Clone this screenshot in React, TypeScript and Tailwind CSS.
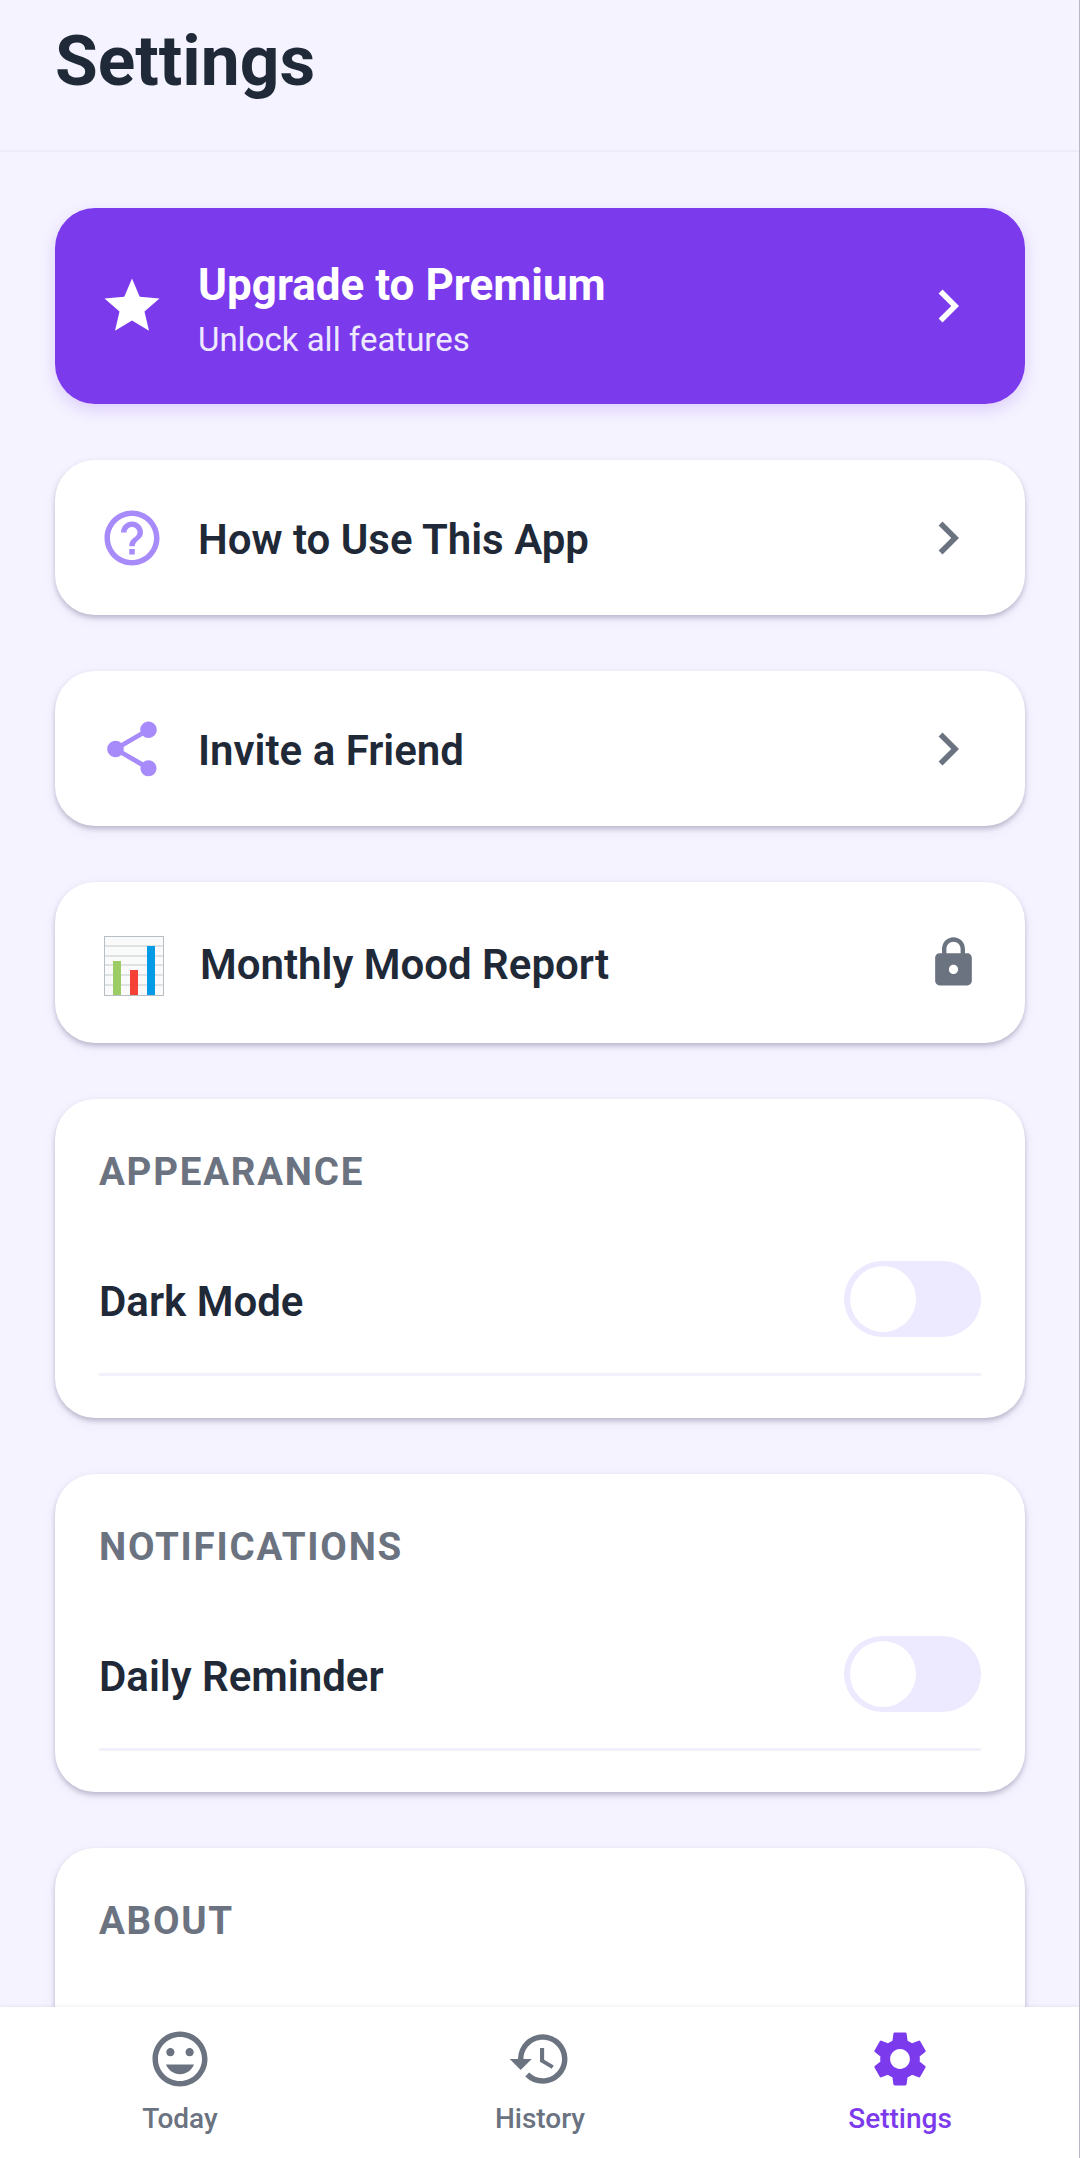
import {
  MdChevronRight,
  MdHelpOutline,
  MdHistory,
  MdLock,
  MdMood,
  MdSettings,
  MdShare,
  MdStar,
} from "react-icons/md";

function ChartEmoji() {
  return (
    <svg width="60" height="60" viewBox="0 0 60 60">
      <rect x="0.5" y="0.5" width="59" height="59" fill="#fafafa" stroke="#b8bfc4" />
      {[10, 20, 29, 39, 49].map((y) => (
        <line key={y} x1="1" x2="59" y1={y} y2={y} stroke="#c4cacd" strokeWidth="1" />
      ))}
      <rect x="9" y="25" width="8" height="34" fill="#9ccc65" />
      <rect x="26" y="34" width="8" height="25" fill="#f44336" />
      <rect x="43" y="10" width="8" height="49" fill="#039be5" />
    </svg>
  );
}

function Toggle() {
  return (
    <div className="flex h-[76px] w-[137px] items-center rounded-full bg-[#ede9fe] pl-[6px]">
      <div className="h-[66px] w-[66px] rounded-full bg-white" />
    </div>
  );
}

function LinkCard({ icon, label }: { icon: React.ReactNode; label: string }) {
  return (
    <div className="flex h-[155px] items-center rounded-[40px] bg-white px-[44px] shadow-[0_3px_5px_rgba(60,50,90,0.28),0_4px_14px_rgba(90,70,160,0.06)]">
      {icon}
      <span className="ml-[33px] flex-1 pt-[3px] text-[42px] font-semibold text-[#1f2937]">{label}</span>
      <MdChevronRight className="text-[#6b7280]" size={66} />
    </div>
  );
}

function ToggleSection({ title, label, height }: { title: string; label: string; height: string }) {
  return (
    <div className={`${height} rounded-[40px] bg-white px-[44px] pt-[52px] shadow-[0_3px_5px_rgba(60,50,90,0.28),0_4px_14px_rgba(90,70,160,0.06)]`}>
      <div className="text-[38.5px] leading-[42px] font-bold tracking-[1.75px] text-[#6b7280]">{title}</div>
      <div className="mt-[32px] flex h-[151px] items-center justify-between border-b-[3px] border-[#f3f0fc]">
        <span className="pt-[4px] text-[42px] font-semibold text-[#1f2937]">{label}</span>
        <Toggle />
      </div>
    </div>
  );
}

export default function App() {
  return (
    <div className="relative flex h-[2158px] w-[1080px] flex-col overflow-hidden bg-[#f5f3ff] font-['Roboto',sans-serif]">
      <header className="h-[152px] shrink-0 border-b-2 border-[#eeebf6] px-[55px] pt-[22px]">
        <h1 className="text-[69.5px] leading-[80px] font-bold text-[#1f2937]">Settings</h1>
      </header>

      <main className="flex min-h-0 flex-1 flex-col gap-14 overflow-hidden px-[55px] pt-14">
        <div className="flex h-[196px] shrink-0 items-center rounded-[40px] bg-[#7c3aed] px-[44px] shadow-[0_6px_16px_rgba(124,58,237,0.2)]">
          <MdStar className="text-white" size={66} />
          <div className="ml-[33px] flex-1 pt-[6px]">
            <div className="text-[44px] leading-[52px] font-bold text-white">Upgrade to Premium</div>
            <div className="mt-[9px] text-[33px] leading-[40px] text-[#ede9fe]">Unlock all features</div>
          </div>
          <MdChevronRight className="text-white" size={66} />
        </div>

        <div className="shrink-0">
          <LinkCard icon={<MdHelpOutline className="text-[#a78bfa]" size={66} />} label="How to Use This App" />
        </div>
        <div className="shrink-0">
          <LinkCard icon={<MdShare className="text-[#a78bfa]" size={66} />} label="Invite a Friend" />
        </div>

        <div className="flex h-[161px] shrink-0 items-center rounded-[40px] bg-white px-[44px] shadow-[0_3px_5px_rgba(60,50,90,0.28),0_4px_14px_rgba(90,70,160,0.06)]">
          <div className="flex w-[69px] justify-center pt-[6px]">
            <ChartEmoji />
          </div>
          <span className="ml-[32px] flex-1 pt-[3px] text-[42px] font-semibold text-[#1f2937]">Monthly Mood Report</span>
          <MdLock className="text-[#6b7280]" size={55} />
        </div>

        <div className="shrink-0">
          <ToggleSection title="APPEARANCE" label="Dark Mode" height="h-[319px]" />
        </div>
        <div className="shrink-0">
          <ToggleSection title="NOTIFICATIONS" label="Daily Reminder" height="h-[318px]" />
        </div>

        <div className="h-[400px] shrink-0 rounded-[40px] bg-white px-[44px] pt-[52px] shadow-[0_3px_5px_rgba(60,50,90,0.28),0_4px_14px_rgba(90,70,160,0.06)]">
          <div className="text-[38.5px] leading-[42px] font-bold tracking-[1.75px] text-[#6b7280]">ABOUT</div>
        </div>
      </main>

      <nav className="z-10 grid h-[151px] shrink-0 grid-cols-3 bg-white pt-[19px] shadow-[0_-1px_3px_rgba(60,50,90,0.08)]">
        <div className="flex flex-col items-center text-[#6b7280]">
          <MdMood size={66} />
          <span className="mt-[10px] text-[28px] leading-[34px] font-medium">Today</span>
        </div>
        <div className="flex flex-col items-center text-[#6b7280]">
          <MdHistory size={66} />
          <span className="mt-[10px] text-[28px] leading-[34px] font-medium">History</span>
        </div>
        <div className="flex flex-col items-center text-[#7c3aed]">
          <MdSettings size={66} />
          <span className="mt-[10px] text-[28px] leading-[34px] font-medium">Settings</span>
        </div>
      </nav>

      <div className="absolute inset-y-0 right-0 z-20 w-px bg-[#b9b6c6]" />
    </div>
  );
}
